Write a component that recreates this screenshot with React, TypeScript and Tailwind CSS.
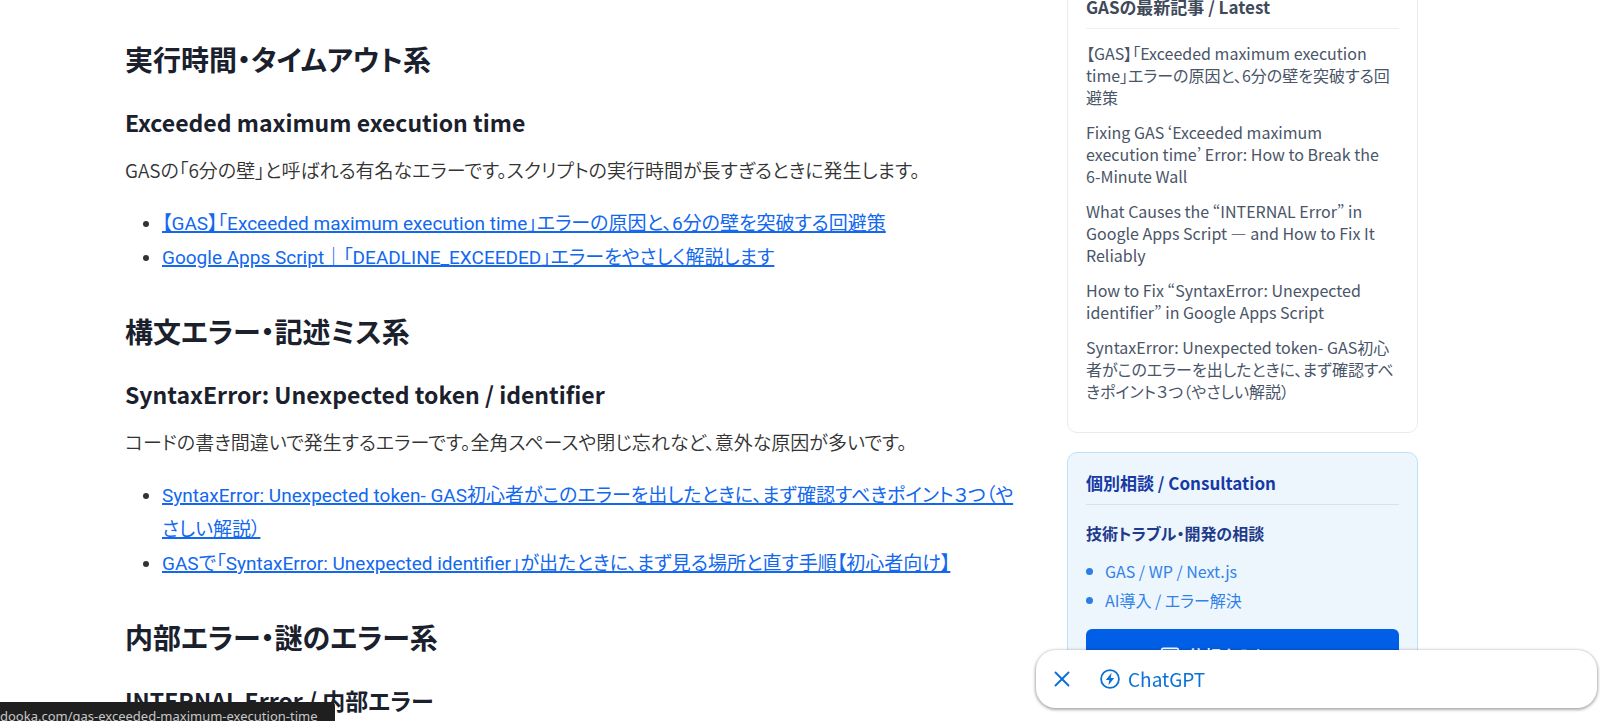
import React from 'react';
import { Mail, X } from 'lucide-react';

interface ErrorSection {
  category: string;
  title: string;
  description: string;
  links: string[];
}

const sections: ErrorSection[] = [
  {
    category: '実行時間・タイムアウト系',
    title: 'Exceeded maximum execution time',
    description: 'GASの「6分の壁」と呼ばれる有名なエラーです。スクリプトの実行時間が長すぎるときに発生します。',
    links: [
      '【GAS】「Exceeded maximum execution time」エラーの原因と、6分の壁を突破する回避策',
      'Google Apps Script｜「DEADLINE_EXCEEDED」エラーをやさしく解説します',
    ],
  },
  {
    category: '構文エラー・記述ミス系',
    title: 'SyntaxError: Unexpected token / identifier',
    description: 'コードの書き間違いで発生するエラーです。全角スペースや閉じ忘れなど、意外な原因が多いです。',
    links: [
      'SyntaxError: Unexpected token- GAS初心者がこのエラーを出したときに、まず確認すべきポイント３つ（やさしい解説）',
      'GASで「SyntaxError: Unexpected identifier」が出たときに、まず見る場所と直す手順【初心者向け】',
    ],
  },
  {
    category: '内部エラー・謎のエラー系',
    title: 'INTERNAL Error / 内部エラー',
    description: '',
    links: [],
  },
];

const latest = [
  '【GAS】「Exceeded maximum execution time」エラーの原因と、6分の壁を突破する回避策',
  'Fixing GAS ‘Exceeded maximum execution time’ Error: How to Break the 6-Minute Wall',
  'What Causes the “INTERNAL Error” in Google Apps Script — and How to Fix It Reliably',
  'How to Fix “SyntaxError: Unexpected identifier” in Google Apps Script',
  'SyntaxError: Unexpected token- GAS初心者がこのエラーを出したときに、まず確認すべきポイント３つ（やさしい解説）',
];

function Article() {
  return (
    <article className="min-w-0 flex-1 pt-[41px] text-[#333]">
      {sections.map((s) => (
        <section key={s.category} className="mb-[38px]">
          <h2 className="text-[28px] leading-9 font-bold text-[#1a202c]">{s.category}</h2>
          <h3 className="mt-[29px] text-[23px] leading-8 font-bold text-[#1a202c]">{s.title}</h3>
          {s.description && <p className="mt-[15px] text-[19px] leading-[34px] font-[350]">{s.description}</p>}
          {s.links.length > 0 && (
            <ul className="mt-5 list-disc pl-[37px] font-[Roboto,'Noto_Sans_CJK_JP',sans-serif] text-[19px] leading-[34px]">
              {s.links.map((l) => (
                <li key={l}>
                  <a href="#" className="text-[#1268ee] underline decoration-2">{l}</a>
                </li>
              ))}
            </ul>
          )}
        </section>
      ))}
    </article>
  );
}

function Sidebar() {
  return (
    <aside className="-mt-6 flex w-[351px] shrink-0 flex-col gap-[19px]">
      <section className="rounded-[10px] border border-[#e8ebef] bg-white px-[18px] pt-[18px] pb-[30px]">
        <h2 className="border-b border-[#edf0f3] pb-[9px] text-[17px] leading-6 font-bold text-[#3f4a5a]">
          GASの最新記事 / Latest
        </h2>
        <ul className="mt-[13px] space-y-[13px] pr-1 text-base leading-[22px] text-[#4a5568]">
          {latest.map((l) => (
            <li key={l}>
              <a href="#">{l}</a>
            </li>
          ))}
        </ul>
      </section>

      <section className="rounded-[10px] border border-[#bee3f8] bg-[#edf6fd] px-[18px] pt-[18px] pb-5">
        <h2 className="border-b border-[#d5e3f0] pb-[9px] text-[17px] leading-6 font-bold text-[#1639a5]">
          個別相談 / Consultation
        </h2>
        <h3 className="mt-4 text-base leading-6 font-bold text-[#1e3a8a]">技術トラブル・開発の相談</h3>
        <ul className="mt-[14px] space-y-[5px] text-base leading-6 text-[#3182e8]">
          {['GAS / WP / Next.js', 'AI導入 / エラー解決'].map((t) => (
            <li key={t} className="flex items-center gap-3">
              <span className="size-[7px] rounded-full bg-[#2b7de9]" />
              {t}
            </li>
          ))}
        </ul>
        <a
          href="#"
          className="mt-[17px] flex h-[52px] items-center justify-center gap-2 rounded-md bg-[#005fe6] text-base font-bold text-white"
        >
          <Mail className="size-5" />
          依頼する / Contact
        </a>
      </section>
    </aside>
  );
}

function ChatBar() {
  return (
    <div className="fixed right-[3px] bottom-[13px] flex h-[58px] w-[561px] items-center rounded-[20px] bg-white text-[#0b70d8] shadow-[0_1px_3px_1px_rgba(0,0,0,0.32)]">
      <button aria-label="閉じる" className="ml-[13px]">
        <X className="size-[26px]" strokeWidth={1.75} />
      </button>
      <button className="ml-[25px] flex items-center gap-2 text-[19px]">
        <svg viewBox="0 0 20 20" className="size-5" fill="none">
          <circle cx="10" cy="10" r="8.9" stroke="currentColor" strokeWidth="1.8" />
          <path d="M11.6 3.8 5.8 11h3.5l-.9 5.2L14.2 9h-3.5z" fill="currentColor" />
        </svg>
        ChatGPT
      </button>
    </div>
  );
}

export default function App() {
  return (
    <div
      lang="ja"
      className="h-screen overflow-hidden bg-white font-['Noto_Sans_CJK_JP',sans-serif] [font-feature-settings:'palt']"
    >
      <main className="flex gap-[47px] pr-[182px] pl-[125px]">
        <Article />
        <Sidebar />
      </main>
      <ChatBar />
      <div className="fixed bottom-0 left-0 h-[19px] overflow-hidden rounded-tr-sm bg-[#1f1f1f] pr-[17px] font-['Noto_Sans',sans-serif] text-[13px] leading-7 text-[#c7c7c7]">
        dooka.com/gas-exceeded-maximum-execution-time
      </div>
    </div>
  );
}
